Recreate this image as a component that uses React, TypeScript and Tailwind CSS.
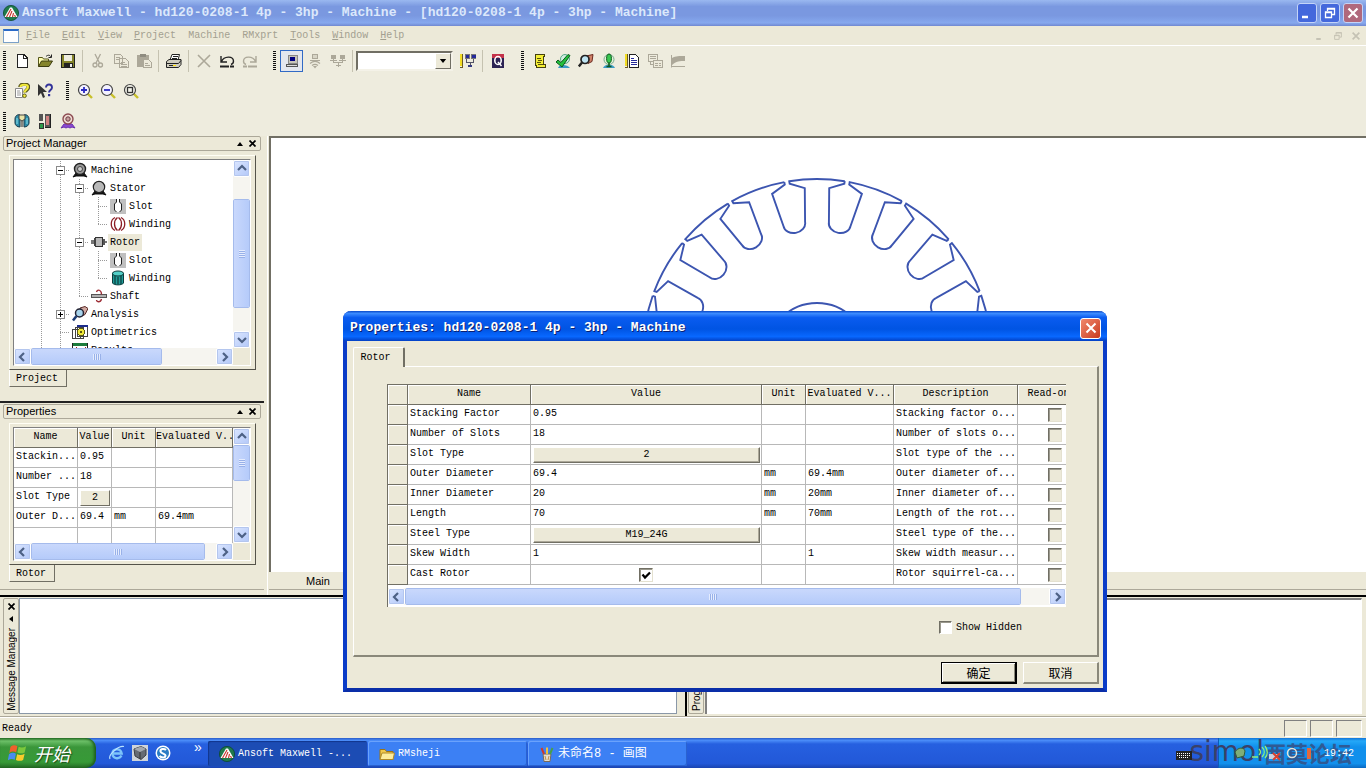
import type { ReactNode } from "react";
import clsx from "clsx";

const mono = "font-['Liberation_Mono','Noto_Sans_CJK_SC',monospace] text-[10px]";
const sans = "font-['Liberation_Sans',sans-serif] text-[11px]";

const raised = "border border-t-white border-l-white border-b-[#716f64] border-r-[#716f64]";
const sunken = "border border-t-[#808080] border-l-[#808080] border-b-white border-r-white";

/* ---------- icons ---------- */

function Svg({ children, soft, size = "size-4" }: { children: ReactNode; soft?: boolean; size?: string }) {
  return (
    <svg viewBox="0 0 16 16" className={clsx("shrink-0", size)} fill="none" shapeRendering={soft ? "auto" : "crispEdges"}>
      {children}
    </svg>
  );
}

const GRAY = "#aca899";

const icons: Record<string, ReactNode> = {
  new: (
    <Svg>
      <path d="M3 1.500h7l3 3v10H3z" fill="#fff" stroke="#222" />
      <path d="M9.500 1.500v3.500h3.500" stroke="#222" />
    </Svg>
  ),
  open: (
    <Svg soft>
      <path d="M1.500 13.500v-9h4l1 1.500h5v2" fill="#ffffb0" stroke="#55551a" />
      <path d="M1.500 13.500l3-5.500h11l-3.500 5.500z" fill="#84842a" stroke="#3c3c10" />
      <path d="M9 3.500c2-2 4-1.500 5 .5M14.500 1.500v3h-3" stroke="#222" />
    </Svg>
  ),
  save: (
    <Svg>
      <rect x="1.500" y="1.500" width="13" height="13" fill="#84842a" stroke="#222" />
      <rect x="4" y="2" width="8" height="6" fill="#eeede0" />
      <rect x="4" y="10" width="9" height="4" fill="#222" />
      <rect x="10" y="11" width="2" height="3" fill="#eee" />
    </Svg>
  ),
  cut: (
    <Svg soft>
      <path d="M5 1l4.500 9M10.500 1L6 10" stroke={GRAY} strokeWidth="1.300" />
      <circle cx="5" cy="12" r="2" stroke={GRAY} strokeWidth="1.300" />
      <circle cx="10.500" cy="12" r="2" stroke={GRAY} strokeWidth="1.300" />
    </Svg>
  ),
  copy: (
    <Svg>
      <path d="M1.500 1.500h6l2 2v7h-8zM6.500 5.500h6l3 3v6h-9z" fill="#edeadb" stroke={GRAY} />
      <path d="M3 4h4M3 6h3M8 9h4M8 11h6M8 13h6" stroke={GRAY} />
    </Svg>
  ),
  paste: (
    <Svg>
      <rect x="1" y="2" width="12" height="12" fill={GRAY} />
      <rect x="4" y="1" width="6" height="3" fill="#8f8c80" />
      <path d="M7.500 6.500h5l3 3v5h-8z" fill="#edeadb" stroke={GRAY} />
      <path d="M9 10h3M9 12h5" stroke={GRAY} />
    </Svg>
  ),
  print: (
    <Svg soft>
      <path d="M4 7l2-5.500h7.500L12 7" fill="#fff" stroke="#222" />
      <path d="M.5 8.500l2.500-2h12v5l-2.500 3H.5z" fill="#d0cdbf" stroke="#222" />
      <path d="M1 10.500h11.500l2.500-3M3 12.500h7M7 3.500h5M6 5.500h5" stroke="#222" />
      <rect x="7" y="12" width="3" height="1" fill="#ffe000" />
    </Svg>
  ),
  del: (
    <Svg soft>
      <path d="M2 2l12 12M14 2L2 14" stroke={GRAY} strokeWidth="1.600" />
    </Svg>
  ),
  undo: (
    <Svg soft>
      <path d="M2 3v6h6M2.500 8.500C5 3 14 2.500 14.500 8c0 2-1 3-2.500 3.500" stroke="#222" strokeWidth="1.400" />
      <path d="M1 13.500h9M11 13.500h4" stroke="#222" strokeWidth="1.800" />
    </Svg>
  ),
  redo: (
    <Svg soft>
      <path d="M14 3v6H8M13.500 8.500C11 3 2 2.500 1.500 8c0 2 1 3 2.500 3.500" stroke={GRAY} strokeWidth="1.400" />
      <path d="M6 13.500h9M1 13.500h4" stroke={GRAY} strokeWidth="1.800" />
    </Svg>
  ),
  local: (
    <Svg>
      <rect x="4" y="2" width="9" height="8" fill="#c8c5b8" stroke="#888" />
      <rect x="6" y="4" width="5" height="4" fill="#000080" />
      <path d="M2.500 11.500h11v2h-11z" fill="#ddd" stroke="#555" />
    </Svg>
  ),
  remote: (
    <Svg soft>
      <rect x="5.500" y="1.500" width="5" height="4" fill="#d8d5c6" stroke={GRAY} />
      <path d="M3 7.500h10M3 10.500c3-2.500 7-2.500 10 0M5 12.500c2-1.500 4-1.500 6 0" stroke={GRAY} strokeWidth="1.200" />
      <path d="M6 13h4l-2 2.500z" fill={GRAY} />
    </Svg>
  ),
  dist: (
    <Svg>
      <path d="M1 2h5v4H1zM10 2h5v4h-5z" fill={GRAY} />
      <path d="M3.500 6v3h9V6M8 9v5M6 12h5M0 7.500h7M9 7.500h7" stroke={GRAY} />
    </Svg>
  ),
  net: (
    <Svg>
      <rect x="0" y="1" width="2" height="12" fill="#f2dc22" />
      <path d="M2.500 1v13H0" stroke="#6b5b22" />
      <path d="M5 1h4v4H5zM11 1h5v4h-5z" fill="#262a9a" stroke="#777" />
      <path d="M6.500 6v3h7V6M10 9v4" stroke="#556" />
      <rect x="8" y="12" width="4" height="2" fill="#333a80" />
    </Svg>
  ),
  q: (
    <Svg soft>
      <rect x="2" y="1" width="12" height="14" fill="#2c2354" />
      <path d="M2 1h12v4H2z" fill="#c4324a" />
      <ellipse cx="8" cy="7.500" rx="3.200" ry="4" stroke="#fff" strokeWidth="1.600" />
      <path d="M8 9l3.500 4" stroke="#fff" strokeWidth="1.500" />
    </Svg>
  ),
  script: (
    <Svg>
      <path d="M3.500 1.500h9v2h-1v8h2v3h-9v-2h-1z" fill="#f4ee36" stroke="#444010" />
      <path d="M5 5h4M6 7h4M5 9h4M6 11h5" stroke="#555010" />
    </Svg>
  ),
  check: (
    <Svg soft>
      <circle cx="10" cy="6" r="4.500" fill="#cfeee0" stroke="#58a888" />
      <path d="M3 15c1-4 9-4 12 0z" fill="#3a9ac4" />
      <path d="M1 9l2-2 3 2.500L13 1.500l2 1L7 14z" fill="#22c03c" stroke="#0d5a1c" />
    </Svg>
  ),
  lens: (
    <Svg soft>
      <path d="M8 3l7-1.500-1 7-4 2z" fill="#d08068" stroke="#6a2a20" />
      <circle cx="7" cy="6.500" r="4" fill="#bfe4f2" stroke="#222" strokeWidth="1.700" />
      <path d="M4 9.500L.8 13.500" stroke="#222" strokeWidth="2.400" />
    </Svg>
  ),
  bulb: (
    <Svg soft>
      <path d="M2 15c1-4.500 11-4.500 12 0z" fill="#3a9ac4" />
      <circle cx="8" cy="6.500" r="5" stroke="#78a890" fill="#e2f4d8" />
      <ellipse cx="8" cy="5.500" rx="2.400" ry="4.500" fill="#38c850" stroke="#0d5a1c" />
      <path d="M8 10v4M5.500 13.500h5" stroke="#0d5a1c" strokeWidth="1.500" />
    </Svg>
  ),
  report: (
    <Svg>
      <rect x="1" y="1" width="2" height="12" fill="#f2dc22" />
      <path d="M3.500 1v13H1" stroke="#6b5b22" />
      <path d="M5.500 1.500h6l3 3v10h-9z" fill="#fff" stroke="#222" />
      <path d="M7 5h3M7 7h6M7 9h6M7 11h6" stroke="#262a9a" />
    </Svg>
  ),
  pages: (
    <Svg>
      <path d="M1.500 1.500h9v7h-9z" stroke={GRAY} />
      <path d="M3 3h6M3 5h6M3.500 9v2h3" stroke={GRAY} />
      <path d="M6.500 7.500h9v7h-9z" fill="#edeadb" stroke={GRAY} />
      <path d="M8 10h3M12 10h2M8 12h3M12 12h2" stroke={GRAY} />
    </Svg>
  ),
  chart: (
    <Svg soft>
      <path d="M1.500 2v12.500M1 13.500h14" stroke={GRAY} />
      <path d="M2 10V5c4-2 7-2 13-2v5c-5 0-9 0-13 4z" fill={GRAY} />
    </Svg>
  ),
  help: (
    <Svg soft>
      <path d="M1.500 5.500h7v9h-7z" fill="#fff" stroke="#888" />
      <path d="M3 8h3M3 10h4M3 12h4" stroke="#999" />
      <path d="M6 4c0-4 8.500-4 8.500 0 0 3-3.500 3-3.500 5.500" stroke="#5c5a20" strokeWidth="3.600" />
      <path d="M6.500 4c0-3 7.500-3 7.500 0 0 3-3.500 3-3.500 5.500" stroke="#f2ea3a" strokeWidth="2" />
      <circle cx="10.500" cy="12.800" r="1.800" fill="#f2ea3a" stroke="#5c5a20" />
    </Svg>
  ),
  whats: (
    <Svg soft>
      <path d="M1 1v12l3-3 2 5 2-1-2-5h4z" fill="#333" />
      <path d="M9 4.500c0-4 6-4 6 0 0 2.500-3 2.500-3 5" stroke="#33339a" strokeWidth="1.900" />
      <rect x="11" y="11" width="2.200" height="2.200" fill="#33339a" />
    </Svg>
  ),
  zoomin: (
    <Svg soft>
      <path d="M10.500 10.500l4.500 4.500" stroke="#c8c02a" strokeWidth="2.400" />
      <circle cx="7" cy="7" r="5.500" fill="#f4f2ff" stroke="#444" strokeWidth="1.200" />
      <path d="M4 7h6M7 4v6" stroke="#2a2ac0" strokeWidth="1.800" />
    </Svg>
  ),
  zoomout: (
    <Svg soft>
      <path d="M10.500 10.500l4.500 4.500" stroke="#c8c02a" strokeWidth="2.400" />
      <circle cx="7" cy="7" r="5.500" fill="#f4f2ff" stroke="#444" strokeWidth="1.200" />
      <path d="M4 7h6" stroke="#2a2ac0" strokeWidth="1.800" />
    </Svg>
  ),
  zoomfit: (
    <Svg soft>
      <path d="M10.500 10.500l4.500 4.500" stroke="#c8c02a" strokeWidth="2.400" />
      <circle cx="7" cy="7" r="5.500" fill="#f4f4ea" stroke="#444" strokeWidth="1.200" />
      <rect x="4.500" y="4.500" width="5" height="5" stroke="#333" strokeWidth="1.300" />
    </Svg>
  ),
  machine3d: (
    <Svg soft>
      <path d="M1 6c0-4 4-5 5-4v12c-3 0-5-2-5-4z" fill="#2c8ca8" stroke="#163848" />
      <path d="M15 6c0-4-4-5-5-4v12c3 0 5-2 5-4z" fill="#2c8ca8" stroke="#163848" />
      <path d="M5 2h6v4l-3 2-3-2z" fill="#e8e4a8" stroke="#444" />
      <path d="M3 5v6M13 5v6" stroke="#8fe4f0" />
      <path d="M8 8v6" stroke="#222" />
    </Svg>
  ),
  material: (
    <Svg>
      <rect x="2" y="1" width="4" height="7" fill="#555" />
      <rect x="2" y="10" width="4" height="5" fill="#2c9a4a" stroke="#333" />
      <rect x="8" y="1" width="6" height="13" fill="#555" />
      <rect x="9" y="3" width="3" height="9" fill="#d08080" />
      <path d="M13.500 1v13.500H8" stroke="#222" />
    </Svg>
  ),
  person: (
    <Svg soft>
      <path d="M1 15l3-4h8l3 4-3-1-2 1-2-1-2 1-2-1z" fill="#8a4ad0" stroke="#6a30b0" />
      <circle cx="8" cy="6" r="5" fill="#f0dcd4" stroke="#8c4a50" strokeWidth="1.400" />
      <circle cx="8" cy="6" r="2.200" fill="#c8a0a0" stroke="#6a3a40" />
    </Svg>
  ),
  logo: (
    <Svg soft>
      <circle cx="8" cy="8" r="7.600" fill="#1f7a4c" stroke="#0d4a2c" strokeWidth=".8" />
      <path d="M1.500 12L7 2.500h2L14.500 12z" fill="#fff" />
      <path d="M3.500 12L8 4M6.500 12l2.500-6M9.500 12l1-4M12.500 12l-1-2" stroke="#c8322c" strokeWidth="1.100" />
    </Svg>
  ),
  treeMachine: (
    <Svg soft>
      <path d="M1 15l3-4h8l3 4-3-1H4z" fill="#111" stroke="#111" />
      <circle cx="8" cy="7" r="5.500" fill="#999" stroke="#222" strokeWidth="1.400" />
      <circle cx="8" cy="7" r="2.500" fill="#ccc" stroke="#444" />
    </Svg>
  ),
  treeStator: (
    <Svg soft>
      <path d="M1 15l3-4h8l3 4-3-1H4z" fill="#111" stroke="#111" />
      <circle cx="8" cy="7" r="5.700" fill="#b8b8b8" stroke="#222" strokeWidth="1.200" />
    </Svg>
  ),
  treeSlot: (
    <Svg soft>
      <rect width="16" height="15" y="1" fill="#c0c0c0" />
      <path d="M7 1v3L4.500 6v6L6.500 14h3l2-2V6L9 4V1z" fill="#fff" />
      <path d="M6.500 1v3l-2 2v6l2 2M9.500 1v3l2 2v6l-2 2" stroke="#222" />
    </Svg>
  ),
  treeWindS: (
    <Svg soft>
      <path d="M5 1.500C0 4 0 12 5 14.500M11 1.500c5 2.500 5 10.500 0 13M7.500 1.500c-4 3-4 10 0 13M8.500 1.500c4 3 4 10 0 13" stroke="#8c1c24" strokeWidth="1.300" />
    </Svg>
  ),
  treeRotor: (
    <Svg>
      <rect x="0" y="6" width="4" height="4" fill="#777" />
      <rect x="4.500" y="3.500" width="7" height="9" fill="#b8b8b8" stroke="#333" />
      <rect x="3" y="4" width="2" height="8" fill="#444" />
      <rect x="12" y="5" width="2" height="6" fill="#555" />
      <rect x="14" y="7" width="2" height="2" fill="#777" />
    </Svg>
  ),
  treeWindR: (
    <Svg soft>
      <path d="M2.500 3v10c1 2.500 10 2.500 11 0V3z" fill="#1f9c98" stroke="#0c3c3c" />
      <ellipse cx="8" cy="3.500" rx="5.500" ry="2.500" fill="#52cfc8" stroke="#0c3c3c" />
      <path d="M5 6v8M8 7v7M11 6v8" stroke="#0c3c3c" strokeWidth="1.200" />
    </Svg>
  ),
  treeShaft: (
    <Svg soft>
      <rect x="0.500" y="6.500" width="15" height="3" fill="#b0b0b0" stroke="#555" />
      <path d="M5.500 4c1-3 5-2.500 5 2.500M10.500 11c-1 4-5 3-5 1" stroke="#9c2c34" strokeWidth="1.300" />
    </Svg>
  ),
  treeAnalysis: (
    <Svg soft>
      <path d="M8 2l5-1.500 3 2-3 6-4 2z" fill="#d0a8a0" stroke="#5a2a28" />
      <circle cx="7.500" cy="7" r="4" fill="#a8d4ec" stroke="#223" strokeWidth="1.500" />
      <path d="M4.500 10L1 14.500" stroke="#1c3c74" strokeWidth="2.600" />
    </Svg>
  ),
  treeOpt: (
    <Svg>
      <path d="M5.500 1.500h10v11h-10zM3.500 3.500h8v11h-8zM.5 5.500h8v9h-8z" fill="#fff" stroke="#444" />
      <rect x="5" y="1" width="11" height="2" fill="#1c2c8c" />
      <circle cx="9" cy="8" r="3.500" fill="#f0e83a" stroke="#5c5a10" />
      <circle cx="9" cy="8" r="1" fill="#fff" stroke="#5c5a10" />
    </Svg>
  ),
  treeResults: (
    <Svg>
      <rect x=".5" y="1.500" width="15" height="13" fill="#fff" stroke="#222" />
      <rect x="1" y="1" width="14" height="3" fill="#1c7c3c" />
      <path d="M2 13l5-6 3 4 4-6M4 5v8" stroke="#a02020" />
    </Svg>
  ),
  folder: (
    <Svg soft>
      <path d="M1 13.500V3.500h5l1.500 2H14v8z" fill="#f0c84a" stroke="#9c7418" />
      <path d="M1 13.500l2-6.500h12.500L14 13.500z" fill="#fdec9c" stroke="#b08a28" />
    </Svg>
  ),
  paint: (
    <Svg soft>
      <path d="M4 8h8l-1 7.500H5z" fill="#e4ddd0" stroke="#7a6a58" />
      <path d="M5 8L2.500 2" stroke="#d03a2a" strokeWidth="2" />
      <path d="M8 8V1.500" stroke="#f0c03a" strokeWidth="2" />
      <path d="M11 8l2.500-6" stroke="#48a048" strokeWidth="2" />
      <path d="M6 10l1 4M10 10l-1 4" stroke="#c09048" />
    </Svg>
  ),
  ie: (
    <Svg soft>
      <path d="M12.500 10.500C10 15 3.500 13.500 3.500 8.500S11.500 2.500 12.700 8.500H4" stroke="#7cc4fa" strokeWidth="2.300" />
      <path d="M1 14C-1 10 9 .5 15 1.500" stroke="#b8e2ff" strokeWidth="1.200" />
    </Svg>
  ),
  cube: (
    <Svg soft>
      <rect width="16" height="16" fill="#cfd4da" />
      <path d="M2 4l7-2.500L14 4v6l-5 4.500L3 11z" fill="#666b73" stroke="#3a3e45" />
      <path d="M2 4l6 3 6-3-5-2.500z" fill="#a4a9b0" />
      <path d="M8 7v7" stroke="#333" />
    </Svg>
  ),
  sogou: (
    <Svg soft>
      <circle cx="8" cy="8" r="7.500" fill="#fff" />
      <circle cx="8" cy="8" r="6" fill="#2a7cc4" />
      <path d="M11 5C9 3 5 4 5.500 6.500S11 8.500 10.500 11 6 12.500 4.500 11" stroke="#fff" strokeWidth="2" />
    </Svg>
  ),
  flag: (
    <Svg soft size="size-5">
      <path d="M2 3c2-1.500 4-1.500 5.500-.5l-1 5C5 6.500 3 6.500 1 8z" fill="#f0602c" />
      <path d="M8.500 3c2 1 4 .8 6-.5l-1.200 5c-1.800 1-3.600 1-5.800 0z" fill="#7cc83c" />
      <path d="M.8 9c2-1.500 4-1.500 5.500-.5l-1 5c-1.500-1-3.500-1-5.500.5z" fill="#4a8cf0" />
      <path d="M7.300 9c2 1 4 .8 6-.5l-1.200 5c-1.800 1-3.600 1-5.800 0z" fill="#f8cc2c" />
    </Svg>
  ),
};

/* ---------- small pieces ---------- */

function Grip() {
  return <div className="mr-1 h-[19px] w-[3px] shrink-0 bg-[repeating-linear-gradient(#111_0_1px,transparent_1px_2px)]" />;
}

function Sep() {
  return <div className="mx-[3px] h-[22px] w-px shrink-0 bg-[#c5c2b0]" />;
}

function Tool({ name, active }: { name: string; active?: boolean }) {
  return (
    <button
      aria-label={name}
      className={clsx("flex h-[22px] w-[23px] shrink-0 items-center justify-center", active && "border border-[#316ac5] bg-[#e4e7ee]")}
    >
      {icons[name]}
    </button>
  );
}

function Tools({ names }: { names: string[] }) {
  return names.map((n, i) => (n === "|" ? <Sep key={i} /> : <Tool key={i} name={n} />));
}

const arrows = {
  left: "M8 3L4 7l4 4",
  right: "M5 3l4 4-4 4",
  up: "M3 8l4-4 4 4",
  down: "M3 5l4 4 4-4",
};

function ArrowButton({ dir }: { dir: keyof typeof arrows }) {
  return (
    <button
      aria-label={`scroll ${dir}`}
      className="flex size-[17px] shrink-0 items-center justify-center rounded-xs border border-white bg-linear-to-br from-[#dbe6ff] to-[#b3c8f8] outline-1 -outline-offset-2 outline-[#b4c6ee]"
    >
      <svg viewBox="0 0 14 14" className="size-3.5">
        <path d={arrows[dir]} fill="none" stroke="#4d6185" strokeWidth="2.200" />
      </svg>
    </button>
  );
}

function HScroll({ thumb }: { thumb: string }) {
  return (
    <div className="flex h-[17px] w-full bg-[#f6f5f0]">
      <ArrowButton dir="left" />
      <div className="min-w-0 flex-1">
        <div
          className={clsx(
            "flex h-[17px] items-center justify-center rounded-xs border border-white bg-linear-to-b from-[#c9d8fc] to-[#b5cbfa] outline-1 -outline-offset-1 outline-[#a5bbec]",
            thumb,
          )}
        >
          <div className="h-1.5 w-2 bg-[repeating-linear-gradient(90deg,#eef3ff_0_1px,#8fa9e4_1px_2px)] opacity-80" />
        </div>
      </div>
      <ArrowButton dir="right" />
    </div>
  );
}

function VScroll({ thumb }: { thumb: string }) {
  return (
    <div className="flex w-[17px] shrink-0 flex-col bg-[#f6f5f0]">
      <ArrowButton dir="up" />
      <div className="min-h-0 flex-1">
        <div
          className={clsx(
            "flex w-[17px] items-center justify-center rounded-xs border border-white bg-linear-to-r from-[#c9d8fc] to-[#b5cbfa] outline-1 -outline-offset-1 outline-[#a5bbec]",
            thumb,
          )}
        >
          <div className="h-2 w-1.5 bg-[repeating-linear-gradient(#eef3ff_0_1px,#8fa9e4_1px_2px)] opacity-80" />
        </div>
      </div>
      <ArrowButton dir="down" />
    </div>
  );
}

function Caption({ title }: { title: string }) {
  return (
    <div className={clsx("mx-[3px] flex h-[15px] shrink-0 items-center rounded-xs border border-[#aca899] pl-[2px] pr-0.5", sans)}>
      <span className="flex-1 leading-[13px]">{title}</span>
      <button aria-label="pin" className="flex w-3 justify-center">
        <svg viewBox="0 0 6 4" className="h-1 w-1.5"><path d="M3 0l3 4H0z" /></svg>
      </button>
      <button aria-label="close" className="flex w-3 justify-center">
        <svg viewBox="0 0 7 7" className="size-[7px]"><path d="M.5.5l6 6M6.500.5l-6 6" stroke="#000" strokeWidth="1.700" /></svg>
      </button>
    </div>
  );
}

function DockTab({ label }: { label: string }) {
  return (
    <div className="flex shrink-0 pl-[9px]">
      <button className={clsx("h-[17px] border-r border-b border-[#716f64] border-l border-l-white pt-0.5 pr-2 pl-1.5 leading-3", mono)}>{label}</button>
    </div>
  );
}

function Frame({ children, className }: { children: ReactNode; className: string }) {
  return (
    <div className={clsx("mt-1 mr-2 ml-[9px] shrink-0 border border-t-[#fffef5] border-l-[#fffef5] border-r-[#55534a] border-b-[#55534a] p-[3px] pr-1", className)}>
      <div className={clsx("flex h-full w-full flex-col overflow-hidden bg-white", sunken)}>{children}</div>
    </div>
  );
}

/* ---------- project tree ---------- */

type Node = { label: string; icon: string; cells: string; selected?: boolean };

// cells: v = line, t = branch, l = last branch, - / + = expander
const tree: Node[] = [
  { label: "Machine", icon: "treeMachine", cells: "v-" },
  { label: "Stator", icon: "treeStator", cells: "vv-" },
  { label: "Slot", icon: "treeSlot", cells: "vvvt" },
  { label: "Winding", icon: "treeWindS", cells: "vvvl" },
  { label: "Rotor", icon: "treeRotor", cells: "vv-", selected: true },
  { label: "Slot", icon: "treeSlot", cells: "vvvt" },
  { label: "Winding", icon: "treeWindR", cells: "vvvl" },
  { label: "Shaft", icon: "treeShaft", cells: "vvl" },
  { label: "Analysis", icon: "treeAnalysis", cells: "v+" },
  { label: "Optimetrics", icon: "treeOpt", cells: "vt" },
  { label: "Results", icon: "treeResults", cells: "vt" },
];

function Guide({ kind }: { kind: string }) {
  const box = kind === "-" || kind === "+";
  return (
    <svg viewBox="0 0 19 18" className="h-[18px] w-[19px] shrink-0" fill="none" shapeRendering="crispEdges">
      <path d={kind === "l" ? "M9.500 0v9" : "M9.500 0v18"} stroke="#999" strokeDasharray="1 1" />
      {kind !== "v" && <path d="M9 9.500h10" stroke="#999" strokeDasharray="1 1" />}
      {box && <rect x="5.500" y="5.500" width="8" height="8" fill="#fff" stroke="#8a8a8a" />}
      {box && <path d="M7 9.500h5" stroke="#000" />}
      {kind === "+" && <path d="M9.500 7v5" stroke="#000" />}
    </svg>
  );
}

function Tree() {
  return (
    <ul className="min-w-0 flex-1 overflow-hidden pt-px pl-[18px]">
      {tree.map((n, i) => (
        <li key={i} className="flex h-[18px] items-center">
          {n.cells.split("").map((c, j) => (
            <Guide key={j} kind={c} />
          ))}
          <span className="flex w-[19px] shrink-0 justify-center">{icons[n.icon]}</span>
          <span className={clsx("px-0.5 leading-[17px]", mono, n.selected && "bg-[#ece9d8]")}>{n.label}</span>
        </li>
      ))}
    </ul>
  );
}

/* ---------- tables ---------- */

const th = "h-5 overflow-hidden border-r border-b border-[#716f64] bg-[#ece9d8] pb-0.5 text-center font-normal whitespace-nowrap shadow-[inset_1px_1px_0_#fff]";
const td = "h-5 overflow-hidden border-r border-b border-[#b8b8b8] whitespace-nowrap";
const tdText = "pb-0.5 pl-0.5";

function DockTable() {
  const rows = [
    ["Stackin...", "0.95", "", ""],
    ["Number ...", "18", "", ""],
    ["Slot Type", "2", "", ""],
    ["Outer D...", "69.4", "mm", "69.4mm"],
    ["", "", "", ""],
  ];
  return (
    <table className={clsx("w-full table-fixed border-separate border-spacing-0 leading-4", mono)}>
      <colgroup>
        <col className="w-16" />
        <col className="w-[34px]" />
        <col className="w-11" />
        <col />
      </colgroup>
      <thead>
        <tr>
          {["Name", "Value", "Unit", "Evaluated V.."].map((h) => (
            <th key={h} className={th}>{h}</th>
          ))}
        </tr>
      </thead>
      <tbody>
        {rows.map((r, i) => (
          <tr key={i}>
            {r.map((c, j) =>
              i === 2 && j === 1 ? (
                <td key={j} className={clsx(td, "pl-0.5")}>
                  <button className={clsx("block h-4 w-[30px] bg-[#ece9d8] leading-[14px]", raised)}>{c}</button>
                </td>
              ) : (
                <td key={j} className={clsx(td, tdText)}>{c}</td>
              ),
            )}
          </tr>
        ))}
      </tbody>
    </table>
  );
}

type Row = { name: string; value: string; unit?: string; evaluated?: string; desc: string; kind?: "button" | "check" };

const rows: Row[] = [
  { name: "Stacking Factor", value: "0.95", desc: "Stacking factor o..." },
  { name: "Number of Slots", value: "18", desc: "Number of slots o..." },
  { name: "Slot Type", value: "2", desc: "Slot type of the ...", kind: "button" },
  { name: "Outer Diameter", value: "69.4", unit: "mm", evaluated: "69.4mm", desc: "Outer diameter of..." },
  { name: "Inner Diameter", value: "20", unit: "mm", evaluated: "20mm", desc: "Inner diameter of..." },
  { name: "Length", value: "70", unit: "mm", evaluated: "70mm", desc: "Length of the rot..." },
  { name: "Steel Type", value: "M19_24G", desc: "Steel type of the...", kind: "button" },
  { name: "Skew Width", value: "1", evaluated: "1", desc: "Skew width measur..." },
  { name: "Cast Rotor", value: "", desc: "Rotor squirrel-ca...", kind: "check" },
];

const box = "block size-3.5 appearance-none border border-t-[#716f64] border-l-[#716f64] border-b-[#e4e1d0] border-r-[#e4e1d0] shadow-[inset_1px_1px_0_#9a988c]";

function ValueCell({ row }: { row: Row }) {
  if (row.kind === "button") {
    return (
      <td className={clsx(td, "pl-0.5")}>
        <button className={clsx("block h-4 w-[227px] bg-[#ece9d8] leading-[13px] shadow-[inset_-1px_-1px_0_#aca899]", raised)}>{row.value}</button>
      </td>
    );
  }
  if (row.kind === "check") {
    return (
      <td className={td}>
        <div className="relative mx-auto size-3.5">
          <input type="checkbox" aria-label={row.name} defaultChecked className={clsx("peer bg-white", box)} />
          <svg viewBox="0 0 14 14" className="pointer-events-none absolute inset-0 hidden size-3.5 peer-checked:block">
            <path d="M3.500 6.500l2.500 3 5-5" fill="none" stroke="#000" strokeWidth="2.200" />
          </svg>
        </div>
      </td>
    );
  }
  return <td className={clsx(td, tdText)}>{row.value}</td>;
}

function PropertyTable() {
  return (
    <table className={clsx("w-[704px] table-fixed border-separate border-spacing-0 leading-4", mono)}>
      <colgroup>
        <col className="w-5" />
        <col className="w-[123px]" />
        <col className="w-[231px]" />
        <col className="w-11" />
        <col className="w-[88px]" />
        <col className="w-[124px]" />
        <col className="w-[74px]" />
      </colgroup>
      <thead>
        <tr>
          {["", "Name", "Value", "Unit", "Evaluated V...", "Description", "Read-only"].map((h, i) => (
            <th key={i} className={th}>{h}</th>
          ))}
        </tr>
      </thead>
      <tbody>
        {rows.map((r) => (
          <tr key={r.name}>
            <th className={th} />
            <td className={clsx(td, tdText)}>{r.name}</td>
            <ValueCell row={r} />
            <td className={clsx(td, tdText)}>{r.unit}</td>
            <td className={clsx(td, tdText)}>{r.evaluated}</td>
            <td className={clsx(td, tdText)}>{r.desc}</td>
            <td className={td}>
              <input type="checkbox" aria-label={`${r.name} read-only`} disabled className={clsx("mx-auto bg-[#ece9d8]", box)} />
            </td>
          </tr>
        ))}
      </tbody>
    </table>
  );
}

/* ---------- rotor lamination ---------- */

const slotPath =
  "M-2.500-174V-171.500L-16.600-164.500L-11-131A11 9 0 0 0 11-131L16.600-164.500L2.500-171.500V-174A174 174 0 0 1 57.200-164.300";

function Lamination() {
  return (
    <svg viewBox="-176 -176 352 352" className="size-[352px] shrink-0" fill="none" stroke="#3c55b0" strokeWidth="1.900">
      {Array.from({ length: 18 }, (_, k) => (
        <path key={k} d={slotPath} transform={`rotate(${10 + 20 * k})`} />
      ))}
      <circle r="50" />
    </svg>
  );
}

/* ---------- dialog ---------- */

function Dialog() {
  return (
    <div
      role="dialog"
      className="absolute top-[311px] left-[343px] flex w-[764px] flex-col rounded-t-lg border-x-4 border-b-4 border-[#0a3cc8] border-b-[#0a2ea8] bg-[#ece9d8]"
    >
      <div className="-mx-1 flex h-[30px] items-center rounded-t-lg bg-[linear-gradient(#0848c8_0,#3c8cff_8%,#0a5cf0_22%,#0054e3_60%,#0868ff_85%,#0340c4_100%)] pt-1 pr-1.5 pl-[7px]">
        <h2 className="flex-1 font-['Liberation_Mono',monospace] text-[13px] font-bold text-white [text-shadow:1px_1px_#0a1e70]">
          Properties: hd120-0208-1 4p - 3hp - Machine
        </h2>
        <button
          aria-label="Close dialog"
          className="flex size-[21px] items-center justify-center rounded-[3px] border border-white bg-linear-to-br from-[#f0886c] to-[#c8381c]"
        >
          <svg viewBox="0 0 12 12" className="size-3"><path d="M1.500 1.500l9 9M10.500 1.500l-9 9" stroke="#fff" strokeWidth="2" /></svg>
        </button>
      </div>

      <div className="px-1.5 pt-1.5">
        <div className="relative z-10 -mb-px flex">
          <button className={clsx("h-5 w-[52px] rounded-t-xs border-t border-l border-white border-r-2 border-r-[#716f64] bg-[#ece9d8] pr-1.5", mono)}>
            Rotor
          </button>
        </div>
        <div className="mr-[-2px] h-[291px] border-t border-l border-white border-r-2 border-b-2 border-r-[#8a887a] border-b-[#8a887a] pt-[17px] pr-[31px] pl-[33px]">
          <div className="h-[223px] overflow-hidden border-t border-l border-[#716f64] bg-white">
            <PropertyTable />
            <div className="pt-[3px]">
              <HScroll thumb="w-[616px]" />
            </div>
          </div>
          <label className={clsx("mt-[13px] mr-11 flex items-center justify-end gap-1", mono)}>
            <input type="checkbox" className="size-[13px] appearance-none border border-[#716f64] border-r-white border-b-white bg-white shadow-[inset_1px_1px_0_#9a988c]" />
            Show Hidden
          </label>
        </div>
      </div>

      <div className="flex justify-end gap-1.5 pt-[5px] pr-1 pb-1 text-[12px] font-['Noto_Sans_CJK_SC',sans-serif]">
        <button className="h-[22px] w-[76px] border border-r-2 border-b-2 border-black bg-[#ece9d8] leading-none shadow-[inset_1px_1px_0_#fff,inset_-1px_-1px_0_#8a887a]">确定</button>
        <button className="h-[22px] w-[76px] border border-t-white border-l-white border-r-2 border-b-2 border-r-[#8a887a] border-b-[#8a887a] bg-[#ece9d8] leading-none">取消</button>
      </div>
    </div>
  );
}

/* ---------- window chrome ---------- */

const menus = ["File", "Edit", "View", "Project", "Machine", "RMxprt", "Tools", "Window", "Help"];
const noAccel = ["Machine", "RMxprt"];

function WinGlyph({ kind, className }: { kind: "min" | "restore" | "close"; className: string }) {
  return (
    <svg viewBox="0 0 12 12" className={clsx("size-3", className)} fill="none" stroke="currentColor">
      {kind === "min" && <path d="M1 10h6" strokeWidth="2.500" />}
      {kind === "restore" && <path d="M3.500 4V1.500h7v6H8M3 2h8M1.500 5h6v5.500h-6zM1 5.500h7" strokeWidth="1.300" />}
      {kind === "close" && <path d="M1.500 1.500l9 9M10.500 1.500l-9 9" strokeWidth="2.200" />}
    </svg>
  );
}

function TitleBar() {
  return (
    <header className="flex h-[26px] shrink-0 items-center gap-[3px] bg-[linear-gradient(#9ab8f0_0,#7a98e0_25%,#7a98e0_60%,#86a8ee_88%,#7088d0_100%)] px-[3px]">
      {icons.logo}
      <h1 className="flex-1 truncate font-['Liberation_Mono',monospace] text-[13px] font-bold text-[#dce8fb]">
        Ansoft Maxwell - hd120-0208-1 4p - 3hp - Machine - [hd120-0208-1 4p - 3hp - Machine]
      </h1>
      {(["min", "restore", "close"] as const).map((k) => (
        <button
          key={k}
          aria-label={k}
          className={clsx(
            "flex size-5 items-center justify-center rounded-[3px] border border-[#c4d4f8]",
            k === "close" ? "bg-[#b0687c]" : "bg-[#4468dc]",
          )}
        >
          <WinGlyph kind={k} className="text-white" />
        </button>
      ))}
    </header>
  );
}

function MenuBar() {
  return (
    <nav className="flex h-5 shrink-0 items-center border-b border-white bg-[#ece9d8] pr-1 pl-[3px]">
      <span className="mr-[7px] h-[14px] w-4 border border-t-2 border-[#7ba0c8] border-t-[#2a6ac8] bg-white" />
      <ul className={clsx("flex flex-1 gap-3 text-[#a3a090]", mono)}>
        {menus.map((m) => (
          <li key={m}>
            <button>{noAccel.includes(m) ? m : <><u>{m[0]}</u>{m.slice(1)}</>}</button>
          </li>
        ))}
      </ul>
      <div className="flex gap-1.5 text-[#c5c2b4]">
        <WinGlyph kind="min" className="scale-75" />
        <WinGlyph kind="restore" className="scale-75" />
        <WinGlyph kind="close" className="scale-75" />
      </div>
    </nav>
  );
}

function Toolbars() {
  return (
    <div className="h-[90px] shrink-0 bg-[#eeecde]">
      <div className="flex h-[29px] items-center pl-[3px]">
        <Grip />
        <Tools names={["new", "open", "save", "|", "cut", "copy", "paste", "|", "print", "|", "del", "undo", "redo"]} />
        <div className="w-3" />
        <Grip />
        <Tool name="local" active />
        <Tools names={["remote", "dist", "|"]} />
        <div className="relative h-5 w-[97px]">
          <select aria-label="Solve setup" className="h-5 w-full appearance-none border-2 border-[#716f64] border-r-[#f4f2e8] border-b-[#f4f2e8] bg-white" />
          <span className={clsx("pointer-events-none absolute top-0.5 right-0.5 flex h-4 w-4 items-center justify-center bg-[#ece9d8]", raised)}>
            <svg viewBox="0 0 8 5" className="h-1 w-2"><path d="M0 0h8L4 5z" /></svg>
          </span>
        </div>
        <div className="w-[3px]" />
        <Tools names={["net", "|", "q"]} />
        <div className="w-3" />
        <Grip />
        <Tools names={["script", "check", "lens", "bulb", "report", "pages", "chart"]} />
      </div>
      <div className="flex h-[31px] items-center pl-[3px]">
        <Grip />
        <Tools names={["help", "whats"]} />
        <div className="w-2.5" />
        <Grip />
        <Tools names={["zoomin", "zoomout", "zoomfit"]} />
      </div>
      <div className="flex h-[30px] items-center pl-[3px]">
        <Grip />
        <Tools names={["machine3d", "material", "person"]} />
      </div>
    </div>
  );
}

function Docks() {
  return (
    <aside className="flex w-[264px] shrink-0 flex-col">
      <Caption title="Project Manager" />
      <Frame className="h-[215px]">
        <div className="flex min-h-0 flex-1">
          <Tree />
          <VScroll thumb="mt-[22px] h-[109px]" />
        </div>
        <div className="flex bg-[#ece9d8] pr-[17px]">
          <HScroll thumb="w-[131px]" />
        </div>
      </Frame>
      <DockTab label="Project" />
      <div className="mt-[14px] mb-px h-0.5 shrink-0 bg-[#222]" />
      <Caption title="Properties" />
      <Frame className="h-[142px]">
        <div className="flex min-h-0 flex-1">
          <div className="min-w-0 flex-1 overflow-hidden"><DockTable /></div>
          <VScroll thumb="h-[36px]" />
        </div>
        <div className="flex bg-[#ece9d8] pr-[17px]">
          <HScroll thumb="w-[174px]" />
        </div>
      </Frame>
      <DockTab label="Rotor" />
      <div className="mt-[7px] border-t border-[#aca899]" />
    </aside>
  );
}

function SideCaption({ title }: { title: string }) {
  return (
    <div className="flex w-4 shrink-0 flex-col items-center gap-1.5 overflow-hidden rounded-xs border border-[#aca899] pt-1 font-['Liberation_Sans',sans-serif] text-[10px]">
      <svg viewBox="0 0 7 7" className="size-[7px] shrink-0"><path d="M.5.5l6 6M6.500.5l-6 6" stroke="#000" strokeWidth="1.700" /></svg>
      <svg viewBox="0 0 4 6" className="h-1.5 w-1 shrink-0"><path d="M4 0v6L0 3z" /></svg>
      <span className="mt-auto mb-0.5 rotate-180 leading-[13px] whitespace-nowrap [writing-mode:vertical-rl]">{title}</span>
    </div>
  );
}

function Taskbar() {
  const tasks = [
    { icon: "logo", label: "Ansoft Maxwell -...", active: true },
    { icon: "folder", label: "RMsheji" },
    { icon: "paint", label: "未命名8 - 画图" },
  ];
  return (
    <footer className="relative flex h-[30px] shrink-0 bg-[linear-gradient(#2a5cc8_0,#4a8cf8_8%,#2660e0_20%,#2258d8_85%,#1a44b0_100%)] text-white">
      <button className="flex w-24 items-center gap-1.5 rounded-r-[10px] bg-[linear-gradient(#2f7a2c_0,#6cc068_10%,#3a963a_30%,#379a37_80%,#256c25_100%)] pl-2 font-['Noto_Sans_CJK_SC',sans-serif] text-[18px] italic shadow-[inset_-2px_0_3px_#1c5c1c] [text-shadow:1px_1px_1px_#1c4c1c]">
        {icons.flag}
        <span className="leading-7">开始</span>
      </button>
      <div className="flex w-28 items-center gap-[7px] pl-[13px]">
        {icons.ie}
        {icons.cube}
        {icons.sogou}
        <span className="mb-3 ml-4 font-['Liberation_Sans',sans-serif] text-[14px] leading-none">»</span>
      </div>
      {tasks.map((t) => (
        <button
          key={t.label}
          className={clsx(
            "my-[3px] mr-px flex h-[25px] w-[159px] items-center gap-[3px] rounded-xs pl-[11px] font-['Liberation_Mono','Noto_Sans_CJK_SC',monospace]",
            t.icon === "paint" ? "text-[12px]" : "text-[10px]",
            t.active ? "bg-[#1c4cb4] shadow-[inset_1px_1px_1px_#12368c]" : "bg-[#3c80f4] shadow-[inset_1px_1px_0_#6aa2fc,inset_-1px_-1px_0_#2a62d0]",
          )}
        >
          {icons[t.icon]}
          <span>{t.label}</span>
        </button>
      ))}
      <div className="ml-auto w-[148px] border-l border-[#0c5cb8] bg-[linear-gradient(#1474d8_0,#24a8f8_10%,#1090ec_30%,#1290ec_85%,#0c68c0_100%)]" />
      <div className="absolute top-0.5 right-3.5 flex items-center">
        <span className="font-['DejaVu_Sans',sans-serif] text-[28px] leading-6 text-[#3a4068]">simol</span>
        <span className="font-['Noto_Sans_CJK_SC',sans-serif] text-[22px] leading-6 font-bold text-[#2f5a94]">西莫论坛</span>
      </div>
      <div className="absolute inset-y-0 right-3 flex items-center gap-3 font-['Liberation_Mono',monospace] text-[10px]">
        <svg viewBox="0 0 16 9" className="mt-1 h-[9px] w-4" shapeRendering="crispEdges">
          <rect width="16" height="9" fill="#222" />
          <path d="M1 2.500h14M1 4.500h14M3 6.500h10" stroke="#fff" strokeDasharray="1 1" />
        </svg>
        <svg viewBox="0 0 80 16" className="ml-7 h-4 w-20" fill="none">
          <path d="M3 7c3-5 9-5 10-1l-1 5-7 2z" fill="#7fae78" stroke="#355c38" />
          <path d="M20 12h6M27 4c2 2 2 4 0 6M30 2c3 3 3 7 0 10M33 1c3 4 3 9 0 12" stroke="#8ff07c" strokeWidth="1.300" />
          <path d="M37 9h9v5h-9z" fill="#c8d0dc" />
          <path d="M41 8l7 7M48 8l-7 7" stroke="#d8402c" strokeWidth="2" />
          <circle cx="60" cy="8" r="4.500" stroke="#e8e4da" strokeWidth="1.500" />
          <path d="M77 3v11" stroke="#e4683c" strokeWidth="4" />
        </svg>
        <span>19:42</span>
      </div>
    </footer>
  );
}

export default function App() {
  return (
    <div className="relative flex h-screen w-full flex-col overflow-hidden bg-[#ece9d8] text-black">
      <TitleBar />
      <MenuBar />
      <Toolbars />

      <div className="flex min-h-0 flex-1">
        <Docks />
        <main className="ml-[3px] flex min-w-0 flex-1 flex-col border-l border-white pl-px">
          <div className="flex min-h-0 flex-1 items-center justify-center overflow-hidden border-t-2 border-l-2 border-[#716f64] bg-white pr-1 pb-1">
            <Lamination />
          </div>
          <div className={clsx("flex h-[18px] items-center border-b border-[#aca899] pt-0.5 pl-[37px]", sans)}>Main</div>
          <div className="h-[5px]" />
        </main>
      </div>

      <section className="flex h-[122px] shrink-0 border-t-2 border-b border-t-black border-b-[#aca899] pl-[3px]">
        <div className="flex min-w-0 flex-1 pt-px pb-0.5">
          <SideCaption title="Message Manager" />
          <div className="mr-2 flex-1 border border-[#8a98a8] bg-white" />
        </div>
        <div className="mr-[3px] flex w-[678px] border-l-2 border-black pt-px pb-0.5 pl-px">
          <SideCaption title="Progress" />
          <div className="mr-px ml-px flex-1 border-t-2 border-r border-l-2 border-[#808080] border-r-white bg-white" />
        </div>
      </section>

      <div className={clsx("flex h-[21px] shrink-0 items-center gap-[3px] border-t border-white pr-1 pl-0.5", mono)}>
        <span className="flex-1">Ready</span>
        <span className={clsx("h-[17px] w-[23px]", sunken)} />
        <span className={clsx("h-[17px] w-[23px]", sunken)} />
        <span className={clsx("h-[17px] w-[26px]", sunken)} />
      </div>

      <Taskbar />
      <Dialog />
    </div>
  );
}
